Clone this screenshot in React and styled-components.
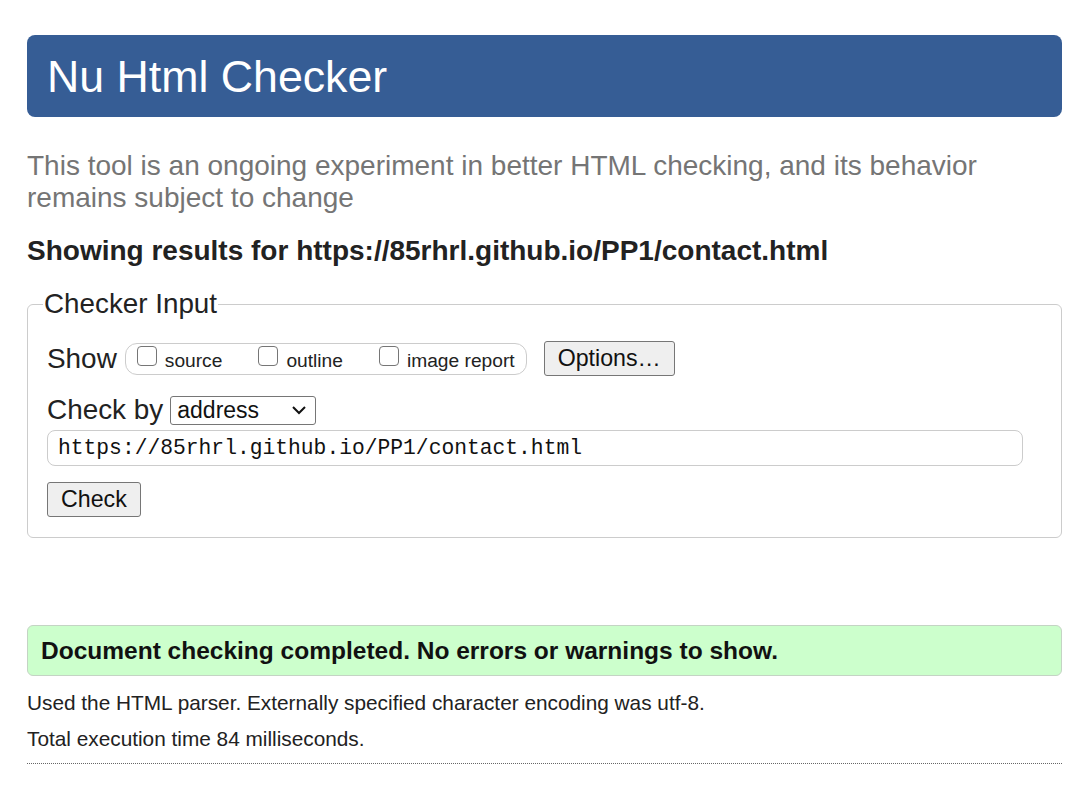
import React from "react";
import styled, { createGlobalStyle } from "styled-components";

const GlobalStyle = createGlobalStyle`
  body {
    margin: 0;
    background: #fff;
    font-family: "Liberation Sans", Arial, sans-serif;
    color: #222;
  }
`;

const Page = styled.div`
  padding: 35px 26px 30px 27px;
`;

const Header = styled.h1`
  margin: 0;
  background-color: #365d95;
  color: #fff;
  font-size: 44.7px;
  font-weight: 400;
  height: 82px;
  line-height: 84px;
  padding: 0 20px;
  border-radius: 8px;
`;

const Intro = styled.p`
  margin: 33px 0 0;
  color: #757575;
  font-size: 28px;
  line-height: 32px;
`;

const Results = styled.h2`
  margin: 21px 0 0;
  font-size: 28px;
  font-weight: 700;
  line-height: 32px;
  color: #222;
`;

const Fieldset = styled.fieldset`
  margin: 21px 0 0;
  border: 1px solid #ccc;
  border-radius: 6px;
  padding: 6px 38px 20px 19px;
`;

const Legend = styled.legend`
  font-size: 27.8px;
  line-height: 32px;
  padding: 0 1px;
  margin-left: -4px;
  color: #222;
`;

const Row = styled.div`
  display: flex;
  align-items: center;
  gap: ${(p) => p.gap || 4}px;
  margin-top: ${(p) => p.top || 0}px;
`;

const Label = styled.span`
  font-size: 27.9px;
  line-height: 32px;
  color: #222;
`;

const CheckGroup = styled.div`
  display: flex;
  align-items: center;
  gap: 36px;
  height: 30px;
  padding: 0 11px 0 11px;
  border: 1px solid #ccc;
  border-radius: 12px;
`;

const CheckItem = styled.label`
  display: flex;
  align-items: center;
  gap: 8px;
  font-size: 19.2px;
  color: #222;
  padding-top: 4px;
`;

const Box = styled.span`
  width: 18px;
  height: 18px;
  border: 1px solid #767676;
  border-radius: 4px;
  background: #fff;
  margin-top: -10px;
`;

const Button = styled.button`
  font-family: "Liberation Sans", Arial, sans-serif;
  font-size: 23.2px;
  color: #111;
  background: #efefef;
  border: 1px solid #767676;
  border-radius: 3px;
  height: 35px;
  padding: 0 13px;
  margin-left: ${(p) => p.ml || 0}px;
`;

const Select = styled.div`
  display: flex;
  align-items: center;
  justify-content: space-between;
  width: 146px;
  height: 29px;
  box-sizing: border-box;
  border: 1px solid #767676;
  border-radius: 3px;
  padding: 0 8px 0 6px;
  font-size: 23px;
  color: #111;
`;

const UrlInput = styled.div`
  margin-top: 4px;
  height: 36px;
  box-sizing: border-box;
  border: 1px solid #ccc;
  border-radius: 8px;
  display: flex;
  align-items: center;
  padding: 0 10px;
  font-family: "Liberation Mono", "DejaVu Sans Mono", monospace;
  font-size: 21.3px;
  color: #111;
`;

const Success = styled.div`
  margin-top: 87px;
  background: #ccffcc;
  border: 1px solid #c4d4c4;
  border-radius: 6px;
  height: 51px;
  box-sizing: border-box;
  display: flex;
  align-items: center;
  padding: 0 13px;
  font-size: 24.5px;
  font-weight: 700;
  color: #111;
`;

const Note = styled.p`
  margin: ${(p) => p.top || 0}px 0 0;
  font-size: 20.8px;
  line-height: 24px;
  color: #222;
`;

const Rule = styled.hr`
  margin: 12px 0 0;
  border: 0;
  border-top: 1px dotted #666;
`;

const Chevron = () => (
  <svg width="16" height="10" viewBox="0 0 16 10">
    <path d="M2 2 L8 8 L14 2" fill="none" stroke="#111" strokeWidth="2" />
  </svg>
);

const App = () => {
  return (
    <Page>
      <GlobalStyle />
      <Header>Nu Html Checker</Header>
      <Intro>
        This tool is an ongoing experiment in better HTML checking, and its
        behavior remains subject to change
      </Intro>
      <Results>Showing results for https://85rhrl.github.io/PP1/contact.html</Results>
      <Fieldset>
        <Legend>Checker Input</Legend>
        <Row gap={8} top={15}>
          <Label>Show</Label>
          <CheckGroup>
            <CheckItem>
              <Box />
              source
            </CheckItem>
            <CheckItem>
              <Box />
              outline
            </CheckItem>
            <CheckItem>
              <Box />
              image report
            </CheckItem>
          </CheckGroup>
          <Button ml={9}>Options…</Button>
        </Row>
        <Row gap={7} top={18}>
          <Label>Check by</Label>
          <Select>
            address
            <Chevron />
          </Select>
        </Row>
        <UrlInput>https://85rhrl.github.io/PP1/contact.html</UrlInput>
        <Row top={16}>
          <Button>Check</Button>
        </Row>
      </Fieldset>
      <Success>Document checking completed. No errors or warnings to show.</Success>
      <Note top={15}>
        Used the HTML parser. Externally specified character encoding was utf-8.
      </Note>
      <Note top={12}>Total execution time 84 milliseconds.</Note>
      <Rule />
    </Page>
  );
};

export default App;
